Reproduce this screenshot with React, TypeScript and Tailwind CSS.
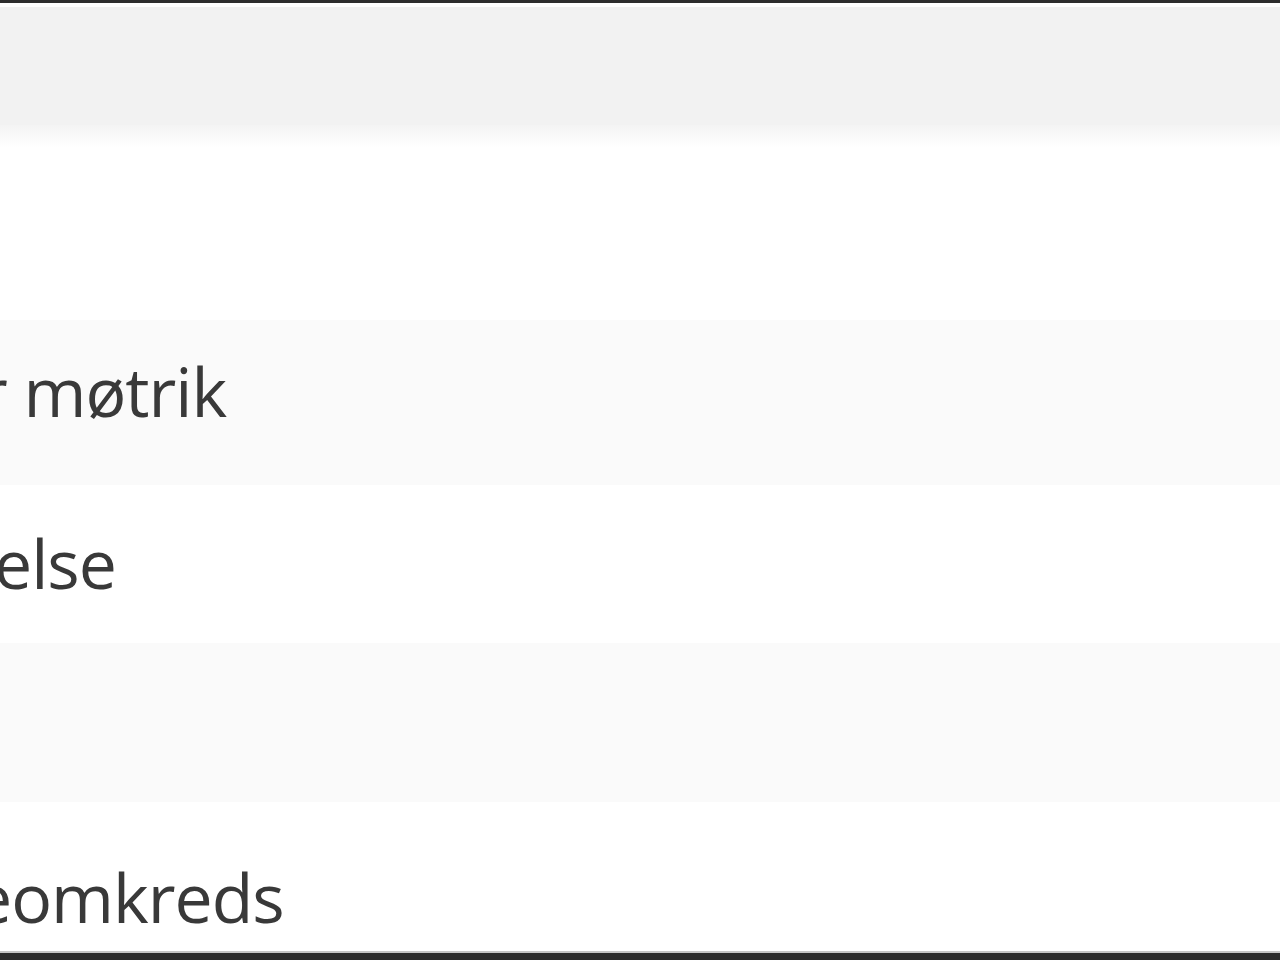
const rows = [
  { text: '', bg: 'bg-white', h: 'h-[195px]', pt: 'pt-0', ml: 'ml-0' },
  { text: 'r møtrik', bg: 'bg-[#fafafa]', h: 'h-[165px]', pt: 'pt-[37px]', ml: 'ml-[-20px]' },
  { text: 'else', bg: 'bg-white', h: 'h-[158px]', pt: 'pt-[44px]', ml: 'ml-[-6px]' },
  { text: '', bg: 'bg-[#fafafa]', h: 'h-[159px]', pt: 'pt-0', ml: 'ml-0' },
  { text: 'eomkreds', bg: 'bg-white', h: 'h-[149px]', pt: 'pt-[61px]', ml: 'ml-[-26px]' },
];

export default function App() {
  return (
    <div className="w-[1280px] h-[960px] overflow-hidden bg-white flex flex-col font-['Open_Sans',sans-serif]">
      <div className="h-[3px] bg-[#2e2e2e] shrink-0" />
      <div className="h-[4px] bg-white shrink-0" />
      <div className="h-[118px] bg-[#f2f2f2] shrink-0" />
      <div className="relative flex flex-col">
        <div className="absolute top-0 left-0 right-0 h-[22px] bg-gradient-to-b from-[#f4f4f4] to-white" />
        {rows.map((row, i) => (
          <div key={i} className={`${row.bg} ${row.h} ${row.pt} shrink-0 overflow-hidden`}>
            {row.text && (
              <div className={`${row.ml} text-[68px] font-medium leading-none text-[#393939] whitespace-nowrap tracking-[-1px]`}>
                {row.text}
              </div>
            )}
          </div>
        ))}
      </div>
      <div className="h-[2px] bg-[#c4c4c4] shrink-0" />
      <div className="flex-1 bg-[#2b2b2b]" />
    </div>
  );
}
